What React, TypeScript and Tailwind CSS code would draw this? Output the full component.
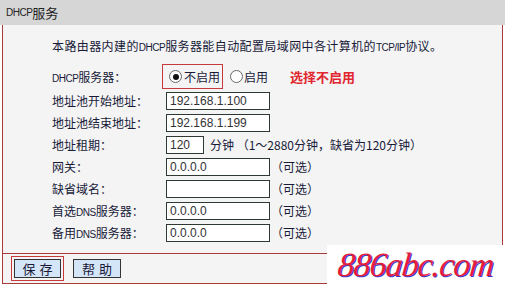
import React from 'react';

const font = "font-['Noto_Sans_CJK_SC','Noto_Sans',sans-serif]";

// small latin text inside CJK lines (bitmap-ish look of the original)
const Sm = ({ children }: { children: React.ReactNode }) => (
  <span className="font-['Liberation_Sans',sans-serif] text-[10px] tracking-[-0.5px]">{children}</span>
);

const Radio = ({ checked }: { checked?: boolean }) => (
  <span className="w-[13px] h-[13px] rounded-full border border-[#6a6a6a] bg-white flex items-center justify-center shrink-0">
    {checked && <span className="w-[6px] h-[6px] rounded-full bg-[#111]"></span>}
  </span>
);

const Field = ({ value, w = 'w-[104px]' }: { value: string; w?: string }) => (
  <div className={`${w} h-[18px] border border-[#2c3a32] bg-white flex items-center pl-[3px] font-['Liberation_Sans',sans-serif] text-[12px] text-[#333]`}>
    {value}
  </div>
);

const Row = ({ label, children }: { label: React.ReactNode; children: React.ReactNode }) => (
  <div className="h-[18px] flex items-center">
    <div className="w-[114px]">{label}</div>
    {children}
  </div>
);

const Optional = () => <span className="ml-[1px]">（可选）</span>;

export default function App() {
  return (
    <div className={`w-[505px] h-[285px] relative bg-white overflow-hidden text-[12px] text-[#181a38] ${font}`}>
      {/* title bar */}
      <div className="h-[25px] bg-[#d6d6d6] pl-[6px] flex items-center text-[13px] text-[#222]">
        <Sm>DHCP</Sm>服务
      </div>

      {/* form */}
      <div className="ml-[2px] w-[501px] h-[228px] border-x border-[#a83a3a] bg-[#f4f4f5] pl-[49px]">
        <div className="pt-[13px] h-[29px] leading-[16px] tracking-[0.4px]">
          本路由器内建的<Sm>DHCP</Sm>服务器能自动配置局域网中各计算机的<Sm>TCP/IP</Sm>协议。
        </div>

        <div className="mt-[10px] h-[25px] flex items-center">
          <div className="w-[110px]"><Sm>DHCP</Sm>服务器：</div>
          <div className="w-[61px] h-[25px] border border-[#c8393b] flex items-center pl-[6px] gap-[2px]">
            <Radio checked />
            <span>不启用</span>
          </div>
          <div className="ml-[7px] flex items-center gap-[1px]">
            <Radio />
            <span>启用</span>
          </div>
          <span className="ml-[22px] text-[13px] font-bold text-[#e0262e]">选择不启用</span>
        </div>

        <div className="mt-[3px] flex flex-col gap-[4px]">
          <Row label="地址池开始地址：">
            <Field value="192.168.1.100" />
          </Row>
          <Row label="地址池结束地址：">
            <Field value="192.168.1.199" />
          </Row>
          <Row label="地址租期：">
            <Field value="120" w="w-[38px]" />
            <span className="ml-[6px]">分钟 （1～2880分钟，缺省为120分钟）</span>
          </Row>
          <Row label="网关：">
            <Field value="0.0.0.0" />
            <Optional />
          </Row>
          <Row label="缺省域名：">
            <Field value="" />
            <Optional />
          </Row>
          <Row label={<>首选<Sm>DNS</Sm>服务器：</>}>
            <Field value="0.0.0.0" />
            <Optional />
          </Row>
          <Row label={<>备用<Sm>DNS</Sm>服务器：</>}>
            <Field value="0.0.0.0" />
            <Optional />
          </Row>
        </div>
      </div>

      {/* buttons */}
      <div className="ml-[2px] w-[501px] h-[31px] border border-[#a83a3a] bg-[#f4f4f5] flex items-center pl-[8px]">
        <div className="border border-[#c8393b] p-[2px]">
          <button className="w-[47px] h-[19px] border border-[#333] bg-[#d5e5f8] text-[13px] text-[#181a38] flex items-center justify-center tracking-[4px] pl-[4px]">
            保存
          </button>
        </div>
        <button className="ml-[9px] w-[48px] h-[19px] border border-[#333] bg-[#d5e5f8] text-[13px] text-[#181a38] flex items-center justify-center tracking-[4px] pl-[4px]">
          帮助
        </button>
      </div>

      {/* watermark */}
      <div className="absolute left-[327px] top-[245px] w-[178px] h-[40px] bg-white flex items-center justify-center">
        <span className="inline-block [font-family:'Liberation_Serif',serif] italic -skew-x-6 text-[34px] leading-none tracking-[-1px] text-[#e3203a] [text-shadow:1px_1px_0_#3b3bcf]">
          886abc.com
        </span>
      </div>
    </div>
  );
}
